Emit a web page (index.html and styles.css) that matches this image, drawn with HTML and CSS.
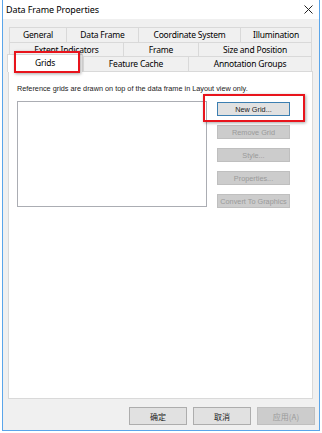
FILE: index.html
```html
<!DOCTYPE html>
<html lang="en">
<head>
    <meta charset="UTF-8">
    <meta name="viewport" content="width=device-width, initial-scale=1.0">
    <title>Data Frame Properties</title>
    <link rel="stylesheet" href="styles.css">
</head>
<body>
    <div class="window">
        <div class="titlebar">
            <span class="title">Data Frame Properties</span>
            <svg class="close" width="9" height="9" viewBox="0 0 9 9">
                <path d="M0.5 0.5 L8.5 8.5 M8.5 0.5 L0.5 8.5" stroke="#222" stroke-width="1" fill="none"/>
            </svg>
        </div>

        <div class="tabs">
            <div class="tab-row row1">
                <div class="tab" style="width:57px">General</div>
                <div class="tab" style="width:72px">Data Frame</div>
                <div class="tab" style="width:102px">Coordinate System</div>
                <div class="tab" style="width:72px">Illumination</div>
            </div>
            <div class="tab-row row2">
                <div class="tab" style="width:114px">Extent Indicators</div>
                <div class="tab" style="width:75px">Frame</div>
                <div class="tab" style="width:114px">Size and Position</div>
            </div>
            <div class="tab-row row3">
                <div class="tab selected" style="width:76px">Grids</div>
                <div class="tab" style="width:105px">Feature Cache</div>
                <div class="tab" style="width:124px">Annotation Groups</div>
            </div>
        </div>

        <div class="panel">
            <p class="desc">Reference grids are drawn on top of the data frame in Layout view only.</p>
            <div class="grid-area">
                <div class="listbox"></div>
                <div class="btn-col">
                    <button class="btn focused">New Grid...</button>
                    <button class="btn disabled">Remove Grid</button>
                    <button class="btn disabled">Style...</button>
                    <button class="btn disabled">Properties...</button>
                    <button class="btn disabled">Convert To Graphics</button>
                </div>
            </div>
        </div>

        <div class="footer">
            <button class="dlg-btn">确定</button>
            <button class="dlg-btn">取消</button>
            <button class="dlg-btn disabled">应用(A)</button>
        </div>

        <!-- annotation boxes -->
        <div class="mark mark-tab"></div>
        <div class="mark mark-btn"></div>
    </div>
</body>
</html>
```

FILE: styles.css
```css
html, body {
    margin: 0;
    padding: 0;
    background: #ffffff;
}
body {
    font-family: "Noto Sans", Arial, sans-serif;
    color: #000;
}
.window {
    position: relative;
    margin-left: 2px;
    width: 316px;
    height: 430px;
    background-color: #f0f0f0;
    border: 1px solid #5aa5ea;
    border-top: none;
    display: flex;
    flex-direction: column;
}
.titlebar {
    height: 19px;
    background: #ffffff;
    display: flex;
    align-items: center;
    justify-content: space-between;
    padding: 0 6px 0 3px;
}
.title {
    font-size: 9px;
    letter-spacing: -0.1px;
}
.tabs {
    margin: 8px 0 0 6px;
}
.tab-row {
    display: flex;
}
.tab {
    box-sizing: border-box;
    height: 15px;
    border: 1px solid #d9d9d9;
    border-right: none;
    border-bottom: none;
    background: #f0f0f0;
    font-size: 8.5px;
    letter-spacing: -0.2px;
    line-height: 14px;
    text-align: center;
    white-space: nowrap;
    overflow: hidden;
}
.tab:last-child {
    border-right: 1px solid #d9d9d9;
}
.row2 .tab {
    height: 14px;
    line-height: 13px;
}
.tab.selected {
    background: #ffffff;
    margin-left: -2px;
    margin-top: -2px;
    height: 18px;
    position: relative;
    z-index: 1;
    border-right: 1px solid #d9d9d9;
    line-height: 16px;
}
.panel {
    box-sizing: border-box;
    margin: -1px 0 0 5px;
    width: 305px;
    height: 328px;
    background: #ffffff;
    border: 1px solid #d9d9d9;
    padding: 13px 0 0 8px;
}
.desc {
    margin: 0;
    font-family: "Liberation Sans", Arial, sans-serif;
    font-size: 7.3px;
    color: #222;
    line-height: 8px;
}
.grid-area {
    display: flex;
    gap: 10px;
    margin-top: 8px;
}
.listbox {
    box-sizing: border-box;
    width: 190px;
    height: 106px;
    border: 1px solid #abadb3;
    background: #fff;
}
.btn-col {
    display: flex;
    flex-direction: column;
    gap: 9px;
    padding-top: 1px;
}
.btn {
    box-sizing: border-box;
    width: 73px;
    height: 14px;
    padding: 0;
    background: #e1e1e1;
    border: 1px solid #adadad;
    font-family: "Liberation Sans", Arial, sans-serif;
    font-size: 7.3px;
    color: #222;
}
.btn.focused {
    border-color: #3c7fb1;
    box-shadow: inset 0 0 0 1px #e1e1e1;
}
.btn.disabled {
    background: #cccccc;
    border-color: #bfbfbf;
    color: #9a9a9a;
}
.footer {
    display: flex;
    justify-content: flex-end;
    gap: 6px;
    margin-top: 8px;
    padding-right: 4px;
}
.dlg-btn {
    box-sizing: border-box;
    width: 58px;
    height: 18px;
    padding: 0;
    background: #e1e1e1;
    border: 1px solid #adadad;
    font-family: "Noto Sans CJK SC", sans-serif;
    font-size: 8px;
    color: #222;
}
.dlg-btn.disabled {
    background: #cccccc;
    border-color: #bfbfbf;
    color: #9a9a9a;
}
.mark {
    position: absolute;
    border: 2px solid #e8141c;
    box-shadow: 1px 1px 3px rgba(0, 0, 0, 0.35);
    z-index: 2;
}
.mark-tab {
    left: 11px;
    top: 51px;
    width: 62px;
    height: 18px;
}
.mark-btn {
    left: 200px;
    top: 94px;
    width: 98px;
    height: 24px;
}
```
